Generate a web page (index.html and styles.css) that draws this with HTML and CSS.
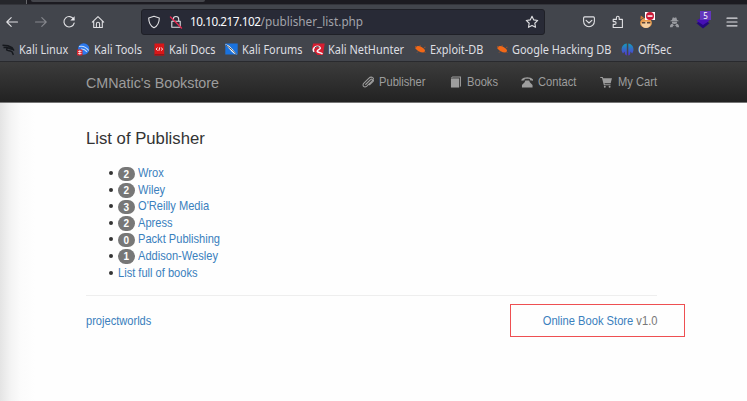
FILE: index.html
```html
<!DOCTYPE html>
<html lang="en">
<head>
<meta charset="utf-8">
<title>List of Publisher</title>
<link rel="stylesheet" href="styles.css">
</head>
<body>
<div class="tabs"><div class="tab-edge"></div><div class="tab"></div></div>
<div class="toolbar">
  <div class="nav-buttons">
    <svg viewBox="0 0 14 14"><path d="M12.5 7H1.800M6.200 2.600 1.800 7l4.400 4.400"/></svg>
    <svg class="dim" viewBox="0 0 14 14"><path d="M1.500 7h10.700M7.800 2.600 12.200 7l-4.400 4.400"/></svg>
    <svg viewBox="0 0 14 14"><path d="M11.700 4.200A5.200 5.200 0 1 0 12.200 8"/><path d="M12.600 1.300v4.300H8.300z" fill="#e8e8ec" stroke="none"/></svg>
    <svg viewBox="0 0 14 14"><path d="M1.300 7.200 7 1.700l5.700 5.500M2.700 6.200v6.300h8.600V6.200M5.400 12.300V8.900a1.600 1.600 0 0 1 3.200 0v3.400"/></svg>
  </div>
  <div class="urlbar">
    <svg class="shield" viewBox="0 0 14 14"><path d="M7 1.200 12.300 3c0 4.800-1.600 7.900-5.300 9.800C3.300 10.900 1.700 7.800 1.700 3z"/></svg>
    <svg class="lock" viewBox="0 0 14 14"><path d="M4.300 6V4.200a2.700 2.700 0 0 1 5.400 0V6M2.800 6.300h8.400v5.900H2.800z"/><path d="m1.500 2 11 11" stroke="#e22850" stroke-width="1.400"/></svg>
    <span class="url"><b>10.10.217.102</b>/publisher_list.php</span>
    <svg class="star" viewBox="0 0 14 14"><path d="m7 1.200 1.750 3.700 4 .55-2.950 2.800.75 4.050L7 10.400l-3.550 1.900.75-4.050-2.950-2.800 4-.55z"/></svg>
  </div>
  <div class="actions">
    <svg viewBox="0 0 14 14"><path d="M2.600 1.900h8.800c.6 0 1 .4 1 1v3.400a5.400 5.400 0 0 1-10.800 0V2.900c0-.6.4-1 1-1zM4.100 5.300 7 8l2.900-2.700"/></svg>
    <svg viewBox="0 0 14 14"><path d="M2.200 12.500V9.400h1.500a1.400 1.400 0 0 0 0-2.800H2.200V4.400h3.200V2.700a1.400 1.400 0 0 1 2.800 0v1.700h3.200v8.100z"/></svg>
    <svg class="fox" viewBox="0 0 17 17"><ellipse cx="7" cy="11" rx="5.900" ry="5" fill="#e99d50"/><path d="m1.300 7.500.5-4 3 2.200z" fill="#d47b31"/><path d="M2.200 11.500q5-4 9.600 0-1 4.500-4.800 4.500t-4.800-4.500z" fill="#f6d0a1"/><path d="M3 10h3.300v1.500H3zm5 0h3.300v1.500H8z" fill="#5e4639"/><path d="M6 0h10v8H6z" fill="#fff"/><circle cx="11" cy="4" r="4" fill="#ca1836"/><path d="M8.500 3.300h5v1.500h-5z" fill="#fff"/></svg>
    <svg class="spy" viewBox="0 0 12 12"><path d="M4 1h1.400l.6.500.6-.5H8l.8 2.800 1.700.7v.8h-9v-.8l1.700-.7zM3.200 5.800h5.600L8.500 7.500 6 8.200l-2.500-.7zM1 11.800c0-2.500 1-3.600 2.600-3.800L6 10l2.400-2c1.600.2 2.600 1.300 2.600 3.800H8.200L7.500 10H4.500l-.7 1.800z"/></svg>
    <div class="layers"><svg viewBox="0 0 14 14"><path d="m7 4 6.500 4.200L7 13.500.5 8.200z" fill="#24087c"/><path d="M7 1.500 13.500 5.700 7 10 .5 5.700z" fill="#4710b5"/></svg><span>5</span></div>
    <svg class="menu" viewBox="0 0 14 14"><path d="M2 3.200h10M2 7h10M2 10.800h10"/></svg>
  </div>
</div>
<div class="bookmarks">
  <div class="bm linux"><svg viewBox="0 0 13 13"><path d="M.5 2.200 6 2.800l4 1.900 2 3M1.500 4.500l3.600.1 3.300 1.200 2.800.8M5.100 4.600 4.700 7c1.400 1 3.800.4 5.200 1.800.8.8.8 1.800 1.500 3" fill="none" stroke="#15181d" stroke-width="1.500"/></svg><span>Kali Linux</span></div>
  <div class="bm tools"><svg viewBox="0 0 13 13"><circle cx="6.700" cy="6" r="5.700" fill="#2b78ec"/><path d="M2 3.500c4-1 7 .3 9.700 4M4 6c3-.4 4 .3 6 2.800" fill="none" stroke="#c6ddfb" stroke-width="1.100"/><rect y="6.500" width="5.500" height="6" rx="1" fill="#db2830"/><path d="M1 8.500h3.500M1 10.500h3.500M2.800 7.200v4.500" stroke="#fff" stroke-width=".7"/></svg><span>Kali Tools</span></div>
  <div class="bm docs"><svg viewBox="0 0 13 13"><path d="M1.500.5h9.700v12H1.500z" fill="#d91618"/><path d="M1.500 11h9.700v1.500H1.500z" fill="#921719"/><path d="M4.600 4.700 3 6.100l1.600 1.400M8.100 4.700l1.600 1.400-1.600 1.400M6.800 4.300l-.9 3.500" fill="none" stroke="#fff" stroke-width=".9"/></svg><span>Kali Docs</span></div>
  <div class="bm forums"><svg viewBox="0 0 13 13"><path d="M.3.500h12.400v11H.3z" fill="#1972df"/><path d="M0 1.500c4-.2 5 2.500 7.500 4.500L12 11.500C7 10.800 6.500 7.500 0 1.500z" fill="#f2f5f8"/><path d="m1 2 6 4.700 4.500 4.500" fill="none" stroke="#252b36" stroke-width=".8"/></svg><span>Kali Forums</span></div>
  <div class="bm hunter"><svg viewBox="0 0 13 13"><path d="M1 .5h11.700L11 12H5.500L0 6.300z" fill="#d71d30"/><path d="M2 8.800C-.5 5 5 1.800 7.800 4.200c2 2.300-3.300 2.300-2.500 4.300.8 1.300 3.200.5 5.200 2.500" fill="none" stroke="#f6f3f5" stroke-width="1.500"/><path d="M3 5c2-2.300 4-1.300 4-.5" fill="none" stroke="#30242d" stroke-width=".9"/></svg><span>Kali NetHunter</span></div>
  <div class="bm exploit"><svg viewBox="0 0 13 13"><path d="M1.500 4.300 3.600 3c2.800-.2 5.800 1.800 7.400 4l-.3 2-1.700.5C6 9.500 3 7.700 1.500 5.500z" fill="#f26817"/><path d="M1 3.300 3 4M6 2l.5 2M10 4.500l1.500-.3M4 8.500 3 9.700M10 8.500l1.500 1" stroke="#a4572b" stroke-width=".8"/></svg><span>Exploit-DB</span></div>
  <div class="bm google"><svg viewBox="0 0 13 13"><path d="M1.500 4.300 3.600 3c2.800-.2 5.800 1.800 7.400 4l-.3 2-1.700.5C6 9.500 3 7.700 1.500 5.500z" fill="#f26817"/><path d="M1 3.300 3 4M6 2l.5 2M10 4.500l1.500-.3M4 8.500 3 9.700M10 8.500l1.500 1" stroke="#a4572b" stroke-width=".8"/></svg><span>Google Hacking DB</span></div>
  <div class="bm offsec"><svg viewBox="0 0 13 13"><defs><linearGradient id="os" x2="0" y2="1"><stop stop-color="#159cbd"/><stop offset="1" stop-color="#5534d2"/></linearGradient></defs><path d="M5.800.5v12C3.800 12 4 10 3.600 8.500L2 10.500C0 8 .3 4.500 2 2.500 3 1.300 4.400.6 5.800.5zM7.300.5c1.400.1 2.800.8 3.800 2 1.700 2 2 5.500 0 8L9.500 8.500C9.200 10 9.500 12 7.300 12.500z" fill="url(#os)"/></svg><span>OffSec</span></div>
</div>
<div class="page">
  <nav class="navbar">
    <a class="brand">CMNatic's Bookstore</a>
    <div class="links">
      <a class="publisher"><svg viewBox="0 0 13 13"><path d="m3.500 9.100 5.400-5.300c1.400-1.300 2.800.1 1.500 1.400L5 10.500c-2.500 2.300-5.500-.5-3-3l5-5c2.900-2.900 7.400.1 4.300 3.400L7.500 9.600" fill="none" stroke="#9d9d9d" stroke-width="1.100"/></svg><span>Publisher</span></a>
      <a class="books"><svg viewBox="0 0 13 13"><path d="M1 2.500h8.500V12H1z"/><path d="M1 2 2.500.6h8.900v9.900l-1.100 1.100V1.500H2.700l-.5.500z"/></svg><span>Books</span></a>
      <a class="contact"><svg viewBox="0 0 13 13"><path d="M.5 5V3.700C3 .5 10 .5 12.500 3.700V5L9.300 4.400V3.200C7.500 2.800 5.500 2.800 3.700 3.200v1.200zM4.500 4.700h4l.7 1.700 2.800 3V12H1V9.400l2.800-3z"/></svg><span>Contact</span></a>
      <a class="cart"><svg viewBox="0 0 13 13"><path d="M.3 1h2.500l.6 1.400h9l-1.300 5.200H4.700l.3 1.100h6v1H4L2.100 2H.3z"/><circle cx="5" cy="11.200" r="1"/><circle cx="10" cy="11.200" r="1"/></svg><span>My Cart</span></a>
    </div>
  </nav>
  <main class="content">
    <h1><span>List of Publisher</span></h1>
    <ul>
      <li><span class="badge">2</span><a>Wrox</a></li>
      <li><span class="badge">2</span><a>Wiley</a></li>
      <li><span class="badge">3</span><a>O'Reilly Media</a></li>
      <li><span class="badge">2</span><a>Apress</a></li>
      <li><span class="badge">0</span><a>Packt Publishing</a></li>
      <li><span class="badge">1</span><a>Addison-Wesley</a></li>
      <li><a>List full of books</a></li>
    </ul>
    <footer><a>projectworlds</a><div class="version"><a>Online Book Store</a> v1.0</div></footer>
  </main>
</div>
</body>
</html>
```
FILE: styles.css
```css
* { box-sizing: border-box; }
html, body { height: 100%; }
body {
  margin: 0;
  overflow: hidden;
  display: flex;
  flex-direction: column;
  background: #fefefe;
  font-family: "Liberation Sans", Arial, sans-serif;
}
svg { display: block; flex: none; }

.tabs { height: 5px; flex: none; display: flex; background: #1c1b21; border-bottom: 1px solid #33343a; }
.tab-edge { width: 27px; border-right: 1px solid #66676b; background: #25262b; }
.tab { width: 174px; height: 2px; margin-left: 4px; background: #44454b; border-radius: 0 0 3px 3px; }

.toolbar { height: 33px; flex: none; display: flex; align-items: center; background: #42454c; font-family: "Noto Sans", sans-serif; }
.toolbar svg { width: 14px; height: 14px; fill: none; stroke: #e0e0e3; stroke-width: 1.1; stroke-linejoin: round; stroke-linecap: round; }
.nav-buttons { width: 141px; display: flex; gap: 14.5px; padding-left: 5px; }
.nav-buttons .dim { stroke: #86888e; }
.urlbar { width: 404px; height: 26px; display: flex; align-items: center; background: #282a36; border: 1px solid #1f2027; border-radius: 3px; padding: 0 5px; }
.urlbar .lock { margin-left: 8px; }
.urlbar .star { margin-left: auto; }
.url { margin-left: 7px; font-size: 12.5px; color: #a2a3aa; white-space: nowrap; transform: scaleX(.94); transform-origin: left; }
.url b { font-weight: 400; color: #fbfbfe; letter-spacing: -.5px; }
.actions { display: flex; align-items: center; padding-left: 37px; gap: 15px; }
.toolbar .fox { width: 17px; height: 17px; stroke: none; margin: -3px -1px 0 -1px; }
.toolbar .spy { width: 11px; height: 12px; fill: #999ba0; stroke: none; margin-left: -1px; }
.layers { position: relative; width: 14px; height: 14px; margin-left: 1px; }
.layers svg { stroke: none; }
.layers span { position: absolute; left: 4px; top: -4px; width: 11px; height: 9px; background: #6337bb; color: #fff; font-size: 8px; line-height: 9px; text-align: center; }
.toolbar .menu { stroke-width: 1.2; }

.bookmarks {
  height: 24px; flex: none; display: grid; align-items: center;
  grid-template-columns: 75px 75.5px 72.5px 86.5px 102px 82px 125.5px 60px;
  padding: 0 0 1px 2px; background: #42454c; border-bottom: 1px solid #292a2e;
  font: 11.9px "Noto Sans", sans-serif; color: #dedfe2; white-space: nowrap;
}
.bm { display: flex; align-items: center; gap: 3.5px; }
.bm span { transform: scaleX(.92); transform-origin: left; }
.bm svg { width: 13px; height: 13px; }

.page { flex: 1; background: linear-gradient(90deg, #e4e4e4, #f4f4f4 11px, #fbfbfb 20px, #fefefe 35px); }
.navbar {
  height: 41px; display: flex; justify-content: space-between; align-items: center;
  padding: 0 90px 0 86px; background: linear-gradient(#3c3c3c, #222);
  border-bottom: 1px solid #777; color: #9d9d9d;
}
.brand { font-size: 15px; transform: scaleX(.953); transform-origin: left; }
.links { display: grid; grid-template-columns: 88px 71px 79.5px 57px; font-size: 12.4px; }
.links a { display: flex; align-items: center; gap: 5px; white-space: nowrap; }
.links span { transform: scaleX(.9); transform-origin: left; }
.links svg { width: 12.5px; height: 12.5px; fill: #9d9d9d; }
.content { width: 571px; margin-left: 86px; padding-top: 23px; font-size: 12.4px; color: #333; }
h1 { margin: 0; font-size: 17.4px; line-height: 25px; font-weight: 400; }
h1 span { display: inline-block; transform: scaleX(.96); transform-origin: left; }
ul { margin: 14px 0; padding: 0 0 0 22.5px; list-style: none; }
li { height: 16.55px; display: flex; align-items: center; }
li::before { content: ""; width: 4px; height: 4px; margin-right: 5.5px; border-radius: 50%; background: #333; }
.content a { color: #3a80bd; }
li a, footer > a { transform: scaleX(.895); transform-origin: left; }
.badge { width: 16.5px; height: 14.5px; margin: 1px 3px 0 0; border-radius: 7.5px; background: #777; color: #fff; font-size: 10px; font-weight: 700; line-height: 15px; text-align: center; }
footer { display: flex; justify-content: space-between; align-items: center; position: relative; height: 51px; border-top: 1px solid #eee; }
.version { color: #777; transform: scaleX(.9); transform-origin: right; }
footer::after { content: ""; position: absolute; left: 424px; top: 8px; width: 173px; height: 31px; border: 1px solid #ee4f52; }
```
